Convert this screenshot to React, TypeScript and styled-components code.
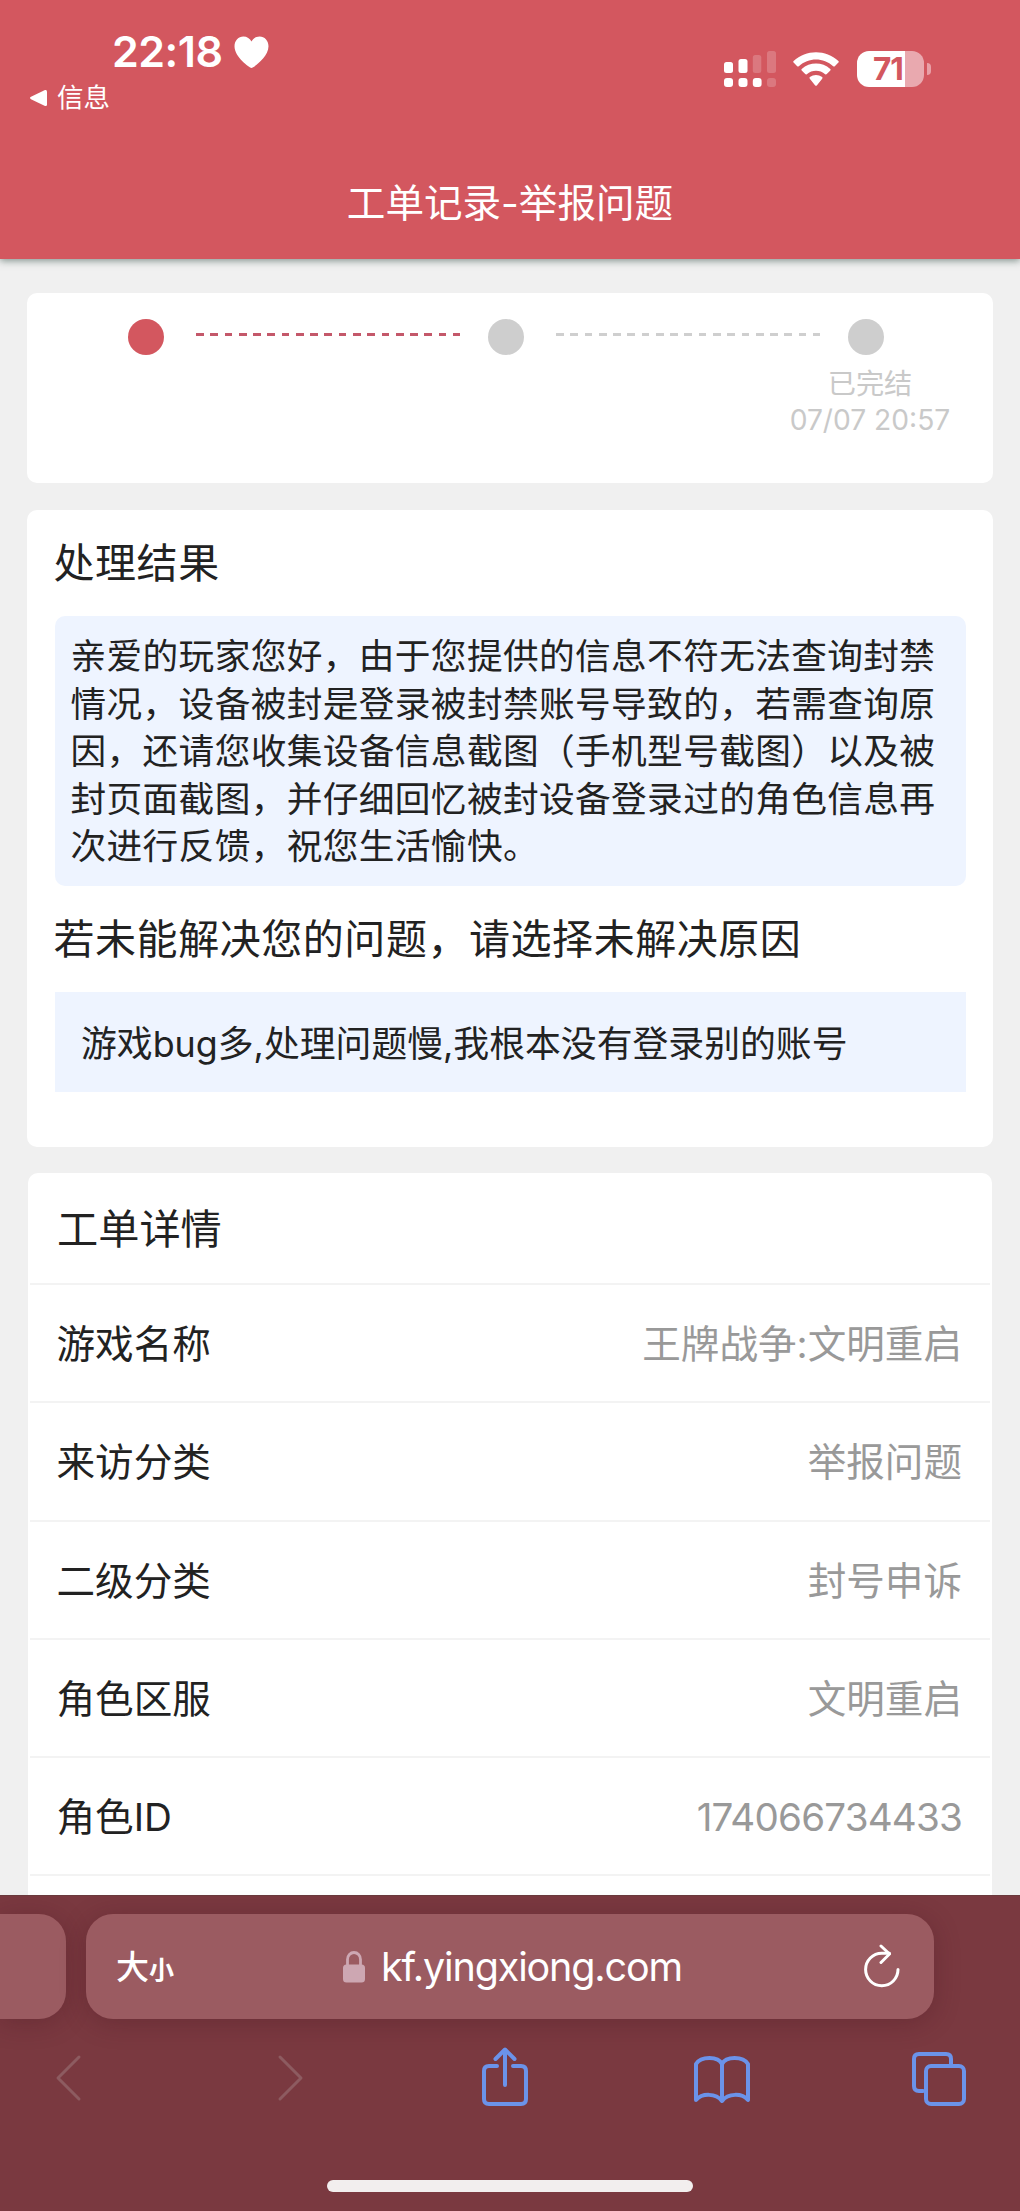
import React from "react";
import styled, { createGlobalStyle } from "styled-components";

const RED = "#d3575f";
const BLUE = "#6b93ea";

const GlobalStyle = createGlobalStyle`
  * { box-sizing: border-box; }
  body {
    margin: 0;
    background: #f0f0f0;
    font-family: Inter, "Noto Sans CJK SC", sans-serif;
    color: #222;
  }
`;

const Screen = styled.div`
  width: 1020px;
  height: 2211px;
  display: flex;
  flex-direction: column;
  overflow: hidden;
  background: #f0f0f0;
`;

const Header = styled.header`
  position: relative;
  z-index: 1;
  flex: none;
  height: 259px;
  display: flex;
  flex-direction: column;
  background: ${RED};
  color: #fff;
  box-shadow: 0 2px 7px rgba(30, 60, 50, 0.5);
`;

const StatusBar = styled.div`
  display: flex;
  justify-content: space-between;
  height: 147px;
  padding: 27px 89px 0 29px;
`;

const StatusLeft = styled.div`
  display: flex;
  flex-direction: column;
`;

const Clock = styled.div`
  display: flex;
  align-items: center;
  gap: 11px;
  height: 49px;
  padding-left: 83px;
  font-size: 43px;
  font-weight: 600;
  line-height: 48px;
  letter-spacing: -0.5px;
`;

const ClockTime = styled.span`
  margin-top: -1px;
`;

const BackLink = styled.div`
  display: flex;
  align-items: center;
  gap: 10px;
  height: 43px;
  font-size: 26.5px;
  line-height: 43px;
`;

const StatusRight = styled.div`
  display: flex;
  align-items: flex-start;
  padding-top: 23.5px;
`;

const Signal = styled.svg`
  width: 52px;
  height: 36px;
  margin-right: 17px;
`;

const Wifi = styled.svg`
  width: 46px;
  height: 36px;
  margin-right: 18px;
`;

const Battery = styled.div`
  width: 67px;
  height: 36px;
  border-radius: 12px;
  background: linear-gradient(90deg, #fff 47.5px, #e9a9af 47.5px);
  color: ${RED};
  font-size: 31.5px;
  font-weight: 700;
  line-height: 36px;
  padding-right: 5px;
  letter-spacing: -1px;
  text-align: center;
`;

const BatteryTip = styled.div`
  width: 4px;
  height: 12px;
  margin: 12px 0 0 3px;
  border-radius: 0 4px 4px 0;
  background: #e9a0a7;
`;

const PageTitle = styled.h1`
  margin: 0;
  height: 112px;
  font-size: 38.6px;
  font-weight: 400;
  line-height: 112px;
  text-align: center;
`;

const Content = styled.main`
  flex: 1;
  min-height: 0;
  overflow: hidden;
  display: flex;
  flex-direction: column;
  padding: 34px 27px 0;
  gap: 27px;
`;

const Card = styled.section<{ $height?: number }>`
  flex: none;
  height: ${(p) => (p.$height ? `${p.$height}px` : "auto")};
  border-radius: 10px;
  background: #fff;
`;

const Steps = styled.div`
  display: flex;
  align-items: flex-start;
  padding: 26px 0 0 100.5px;
`;

const Dot = styled.div<{ $active?: boolean }>`
  width: 36px;
  height: 36px;
  border-radius: 50%;
  background: ${(p) => (p.$active ? RED : "#cecece")};
`;

const Dashes = styled.div<{ $active?: boolean }>`
  width: 264.3px;
  height: 2.5px;
  margin: 14px 28px 0 32px;
  background: repeating-linear-gradient(
    90deg,
    ${(p) => (p.$active ? "#c4586a" : "#cfcfcf")} 0 7.8px,
    transparent 7.8px 14.27px
  );
`;

const StepCaption = styled.div`
  display: flex;
  flex-direction: column;
  width: 200px;
  margin: 11px 0 0 743px;
  font-size: 28.2px;
  line-height: 36px;
  text-align: center;
  color: #c9c9c9;
`;

const ResultCard = styled(Card)`
  padding: 0 27px 0 27.5px;
`;

const SectionTitle = styled.h2<{ $height: number }>`
  margin: 0 0 0 -1px;
  height: ${(p) => p.$height}px;
  font-size: 41px;
  letter-spacing: 0.55px;
  font-weight: 400;
  line-height: ${(p) => p.$height + 1}px;
  white-space: nowrap;
`;

const ResultBox = styled.div`
  height: 270px;
  padding: 17px 16px;
  border-radius: 10px;
  background: #eef4ff;
  font-size: 35.7px;
  letter-spacing: 0.35px;
  line-height: 47.5px;
`;

const ReasonBox = styled.div`
  height: 100px;
  padding-left: 26.5px;
  background: #eef4ff;
  font-size: 35.85px;
  line-height: 104px;
  white-space: nowrap;
`;

const DetailCard = styled(Card)`
  margin: -1px 1px 0;
`;

const DetailTitle = styled.h2`
  margin: 0;
  height: 110px;
  padding: 0 29px;
  font-size: 41.2px;
  font-weight: 400;
  line-height: 113px;
`;

const Row = styled.div`
  display: flex;
  justify-content: space-between;
  height: 118.27px;
  margin: 0 2px;
  padding: 0 28px 0 26.5px;
  border-top: 2px solid #f3f3f3;
  font-size: 38.6px;
  line-height: 118.5px;
`;

const Value = styled.span<{ $numeric?: boolean }>`
  color: #999;
  letter-spacing: ${(p) => (p.$numeric ? "-0.8px" : "0")};
`;

const BrowserBar = styled.footer`
  flex: none;
  height: 316px;
  display: flex;
  flex-direction: column;
  background: #7a3940;
  border-top: 1px solid #6a3a3d;
`;

const TabStrip = styled.div`
  display: flex;
  gap: 20px;
  padding-top: 18px;
`;

const PreviousTab = styled.div`
  width: 66px;
  height: 105px;
  border-radius: 0 27px 27px 0;
  background: #9b5b61;
  box-shadow: 0 4px 26px rgba(70, 20, 30, 0.3);
`;

const AddressBar = styled.div`
  width: 848px;
  height: 105px;
  display: flex;
  align-items: center;
  padding: 0 33px 0 30px;
  border-radius: 27px;
  background: #9b5b61;
  color: #fff;
  box-shadow: 0 4px 26px rgba(70, 20, 30, 0.3);
`;

const TextSize = styled.div`
  display: flex;
  align-items: baseline;
  width: 227px;
  padding-top: 4px;
  font-size: 33px;
  font-weight: 500;
  line-height: 60px;
`;

const SmallGlyph = styled.span`
  font-size: 25px;
  font-weight: 700;
`;

const Host = styled.div`
  flex: 1;
  margin-left: 16px;
  padding-top: 1px;
  font-size: 39.5px;
  line-height: 60px;
  letter-spacing: -1.15px;
`;

const Toolbar = styled.nav`
  display: flex;
  align-items: center;
  height: 60px;
  margin-top: 27px;
  padding-left: 54px;
`;

const ToolIcon = styled.svg<{ $dim?: boolean; $gap?: number }>`
  flex: none;
  height: 60px;
  margin-left: ${(p) => p.$gap ?? 0}px;
  fill: none;
  stroke: ${(p) => (p.$dim ? "#8d5b60" : BLUE)};
  stroke-width: ${(p) => (p.$dim ? 3 : 4)};
  stroke-linecap: round;
  stroke-linejoin: round;
`;

const HomeIndicator = styled.div`
  width: 366px;
  height: 12px;
  margin: 74px auto 0;
  border-radius: 6px;
  background: #f2eeee;
`;

const details = [
  ["游戏名称", "王牌战争:文明重启"],
  ["来访分类", "举报问题"],
  ["二级分类", "封号申诉"],
  ["角色区服", "文明重启"],
  ["角色ID", "174066734433"],
  ["", ""],
];

export default function App() {
  return (
    <Screen>
      <GlobalStyle />
      <Header>
        <StatusBar>
          <StatusLeft>
            <Clock>
              <ClockTime>22:18</ClockTime>
              <svg width="35" height="32" viewBox="0 0 35 32" fill="#fff">
                <path d="M17.5 32C15.500 31.500 0.500 21 0.500 10.200C0.500 4.500 4.500 0.500 9.400 0.500C13 0.500 16 2.500 17.500 5.500C19 2.500 22 0.500 25.600 0.500C30.500 0.500 34.500 4.500 34.500 10.200C34.500 21 19.500 31.500 17.500 32Z" />
              </svg>
            </Clock>
            <BackLink>
              <svg width="18" height="18" viewBox="0 0 18 18" fill="#fff">
                <path d="M2 7.800L16 1Q18 0.500 18 2.500V15.500Q18 17.500 16 17L2 10.200Q0 9 2 7.800Z" />
              </svg>
              信息
            </BackLink>
          </StatusLeft>
          <StatusRight>
            <Signal viewBox="0 0 52 36" fill="#fff">
              <rect x="0" y="11" width="9" height="11" rx="2.500" />
              <rect x="14.500" y="8" width="9" height="14" rx="2.500" />
              <rect x="28.800" y="4" width="8.500" height="18" rx="2.500" opacity="0.2" />
              <rect x="43" y="0" width="9" height="22" rx="2.500" opacity="0.2" />
              <rect x="0" y="27" width="9" height="9" rx="3" />
              <rect x="14.500" y="27" width="9" height="9" rx="3" />
              <rect x="28.800" y="27" width="8.800" height="9" rx="3" />
              <rect x="43" y="27" width="9" height="9" rx="3" opacity="0.2" />
            </Signal>
            <Wifi viewBox="0 0 46 36" fill="#fff">
              <path d="M0.600 11.600Q-0.200 10.800 0.600 10C13 -1.800 33 -1.800 45.400 10Q46.200 10.800 45.400 11.600L41.800 15.200Q41 16 40.200 15.200C30.500 6.200 15.500 6.200 5.800 15.200Q5 16 4.200 15.200Z" />
              <path d="M8.700 19.600Q7.900 18.800 8.700 18C16.800 10.700 29.200 10.700 37.300 18Q38.100 18.800 37.300 19.600L33.800 23.100Q33 23.900 32.200 23.200C26.900 18.600 19.100 18.600 13.800 23.200Q13 23.900 12.200 23.100Z" />
              <path d="M16.800 27.700Q16 26.900 16.900 26.100C20.500 23.300 25.500 23.300 29.100 26.100Q30 26.900 29.200 27.700L24 34.200Q23 35.200 22 34.200Z" />
            </Wifi>
            <Battery>71</Battery>
            <BatteryTip />
          </StatusRight>
        </StatusBar>
        <PageTitle>工单记录-举报问题</PageTitle>
      </Header>

      <Content>
        <Card $height={190}>
          <Steps>
            <Dot $active />
            <Dashes $active />
            <Dot />
            <Dashes />
            <Dot />
          </Steps>
          <StepCaption>
            <span>已完结</span>
            <span>07/07 20:57</span>
          </StepCaption>
        </Card>

        <ResultCard $height={637}>
          <SectionTitle $height={106}>处理结果</SectionTitle>
          <ResultBox>
            亲爱的玩家您好，由于您提供的信息不符无法查询封禁情况，设备被封是登录被封禁账号导致的，若需查询原因，还请您收集设备信息截图（手机型号截图）以及被封页面截图，并仔细回忆被封设备登录过的角色信息再次进行反馈，祝您生活愉快。
          </ResultBox>
          <SectionTitle $height={106}>若未能解决您的问题，请选择未解决原因</SectionTitle>
          <ReasonBox>游戏bug多,处理问题慢,我根本没有登录别的账号</ReasonBox>
        </ResultCard>

        <DetailCard>
          <DetailTitle>工单详情</DetailTitle>
          {details.map(([label, value], i) => (
            <Row key={i}>
              <span>{label}</span>
              <Value $numeric={/^\d+$/.test(value)}>{value}</Value>
            </Row>
          ))}
        </DetailCard>
      </Content>

      <BrowserBar>
        <TabStrip>
          <PreviousTab />
          <AddressBar>
            <TextSize>
              大<SmallGlyph>小</SmallGlyph>
            </TextSize>
            <svg width="22" height="32" viewBox="0 0 22 32">
              <path d="M4.500 15V8.500a6.500 7 0 0 1 13 0V15" fill="none" stroke="#cda7b2" strokeWidth="2.800" />
              <rect x="0" y="13.500" width="22" height="18" rx="3.500" fill="#cda7b2" />
            </svg>
            <Host>kf.yingxiong.com</Host>
            <svg
              width="38"
              height="46"
              viewBox="0 0 38 46"
              fill="none"
              stroke="#fff"
              strokeWidth="3"
              strokeLinecap="round"
              strokeLinejoin="round"
            >
              <path d="M35 25.500A16.200 16.200 0 1 1 18.800 9.300H26.500" />
              <path d="M18 2L26.500 10L18 18.500" />
            </svg>
          </AddressBar>
        </TabStrip>
        <Toolbar>
          <ToolIcon $dim width="28" viewBox="0 0 28 60">
            <path d="M25 11L4 32L25 53" />
          </ToolIcon>
          <ToolIcon $dim $gap={195} width="28" viewBox="0 0 28 60">
            <path d="M3 11L24 32L3 53" />
          </ToolIcon>
          <ToolIcon $gap={175} width="50" viewBox="0 0 50 60">
            <path d="M17 20H9Q4 20 4 25V53Q4 58 9 58H41Q46 58 46 53V25Q46 20 41 20H33" />
            <path d="M25 39V4M15.500 13L25 3.500L34.500 13" />
          </ToolIcon>
          <ToolIcon $gap={163} width="58" viewBox="0 0 58 60">
            <path d="M29 18C25 10 8 10 3 18V54C9 47 23 47 29 55C35 47 49 47 55 54V18C50 10 33 10 29 18V55" />
          </ToolIcon>
          <ToolIcon $gap={159} width="56" viewBox="0 0 56 60">
            <path d="M13 45H9Q4 45 4 40V13Q4 8 9 8H36Q41 8 41 13V18" />
            <rect x="16" y="20" width="38" height="38" rx="5" />
          </ToolIcon>
        </Toolbar>
        <HomeIndicator />
      </BrowserBar>
    </Screen>
  );
}
